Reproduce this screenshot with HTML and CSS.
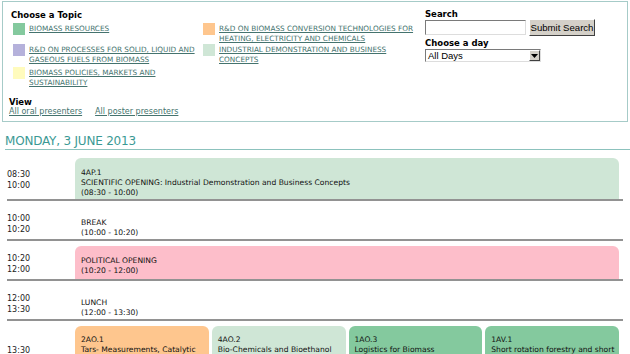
FILE: index.html
```html
<!DOCTYPE html>
<html>
<head>
<meta charset="utf-8">
<link rel="stylesheet" href="styles.css">
</head>
<body>
<div class="filters">
  <div class="topics">
    <div class="label">Choose a Topic</div>
    <div class="topic-grid">
      <div class="topic"><span class="sw c1"></span><a href="#">BIOMASS RESOURCES</a></div>
      <div class="topic"><span class="sw c4"></span><a href="#">R&amp;D ON BIOMASS CONVERSION TECHNOLOGIES FOR HEATING, ELECTRICITY AND CHEMICALS</a></div>
      <div class="topic"><span class="sw c2"></span><a href="#">R&amp;D ON PROCESSES FOR SOLID, LIQUID AND GASEOUS FUELS FROM BIOMASS</a></div>
      <div class="topic"><span class="sw c5"></span><a href="#">INDUSTRIAL DEMONSTRATION AND BUSINESS CONCEPTS</a></div>
      <div class="topic"><span class="sw c3"></span><a href="#">BIOMASS POLICIES, MARKETS AND SUSTAINABILITY</a></div>
    </div>
    <div class="view">
      <div class="label">View</div>
      <div class="view-links"><a href="#">All oral presenters</a><a href="#">All poster presenters</a></div>
    </div>
  </div>
  <div class="search">
    <div class="label">Search</div>
    <div class="search-row"><span class="input"></span><span class="button">Submit Search</span></div>
    <div class="label">Choose a day</div>
    <div class="select"><span class="select-text">All Days</span><span class="arrow"><svg width="7" height="4" viewBox="0 0 7 4"><path d="M0 0h7L3.5 4z" fill="#000"/></svg></span></div>
  </div>
</div>

<h2 class="day">MONDAY, 3 JUNE 2013</h2>

<div class="schedule">
  <div class="row">
    <div class="time">08:30<br>10:00</div>
    <div class="slots"><div class="block c5">4AP.1<br>SCIENTIFIC OPENING: Industrial Demonstration and Business Concepts<br>(08:30 - 10:00)</div></div>
  </div>
  <div class="row">
    <div class="time">10:00<br>10:20</div>
    <div class="slots"><div class="block plain">BREAK<br>(10:00 - 10:20)</div></div>
  </div>
  <div class="row">
    <div class="time">10:20<br>12:00</div>
    <div class="slots"><div class="block pink">POLITICAL OPENING<br>(10:20 - 12:00)</div></div>
  </div>
  <div class="row">
    <div class="time">12:00<br>13:30</div>
    <div class="slots"><div class="block plain">LUNCH<br>(12:00 - 13:30)</div></div>
  </div>
  <div class="row">
    <div class="time">13:30</div>
    <div class="slots multi">
      <div class="block c4">2AO.1<br>Tars- Measurements, Catalytic</div>
      <div class="block c5">4AO.2<br>Bio-Chemicals and Bioethanol</div>
      <div class="block c1">1AO.3<br>Logistics for Biomass</div>
      <div class="block c1">1AV.1<br>Short rotation forestry and short</div>
    </div>
  </div>
</div>
</body>
</html>
```
FILE: styles.css
```css
* { box-sizing: border-box; }
body {
  margin: 0;
  padding: 0 2px 0 2px;
  font-family: "DejaVu Sans", Verdana, sans-serif;
  font-size: 8px;
  color: #000;
  background: #fff;
  width: 630px;
  height: 354px;
  overflow: hidden;
}
a { color: #44736e; text-decoration: underline; }
.label { font-weight: bold; font-size: 8.5px; line-height: 10px; }

.filters {
  border: 1px solid #a6cbc8;
  margin-top: 1px;
  width: 626px;
  height: 121px;
  display: flex;
  padding: 8px 0 0 6px;
}
.topics { width: 417px; display: flex; flex-direction: column; }
.topics > .label { margin-left: 2px; }
.topic-grid {
  display: grid;
  grid-template-columns: 190px 225px;
  grid-template-rows: 21px 23px auto;
  margin-top: 3px;
  padding-left: 4px;
}
.topic { display: flex; align-items: flex-start; }
.topic a { line-height: 9.5px; font-size: 7.3px; margin-left: 4px; margin-top: 1px; }
.sw { width: 12px; height: 12px; flex: none; }
.c1 { background: #84c99e; }
.c2 { background: #b5b1db; }
.c3 { background: #fffbbd; }
.c4 { background: #fec68e; }
.c5 { background: #cfe6d6; }
.pink { background: #fdbeca; }

.view { margin-top: 10px; }
.view-links { display: flex; gap: 13px; line-height: 10px; }

.search { margin: -1px 0 0 -1px; }
.search-row { display: flex; align-items: center; gap: 3px; margin: 0 0 2px; }
.input {
  width: 101px; height: 15px;
  border: 1px solid #7a7a7a; border-right-color: #ddd; border-bottom-color: #ddd;
  background: #fff;
}
.button {
  width: 66px; height: 17px;
  background: #d4d0c8;
  border: 1px solid #fff; border-right-color: #404040; border-bottom-color: #404040;
  font-family: "Liberation Sans", Arial, sans-serif;
  font-size: 9.6px;
  white-space: nowrap;
  display: flex; align-items: center; justify-content: center;
  color: #000;
}
.select {
  width: 116px; height: 13px;
  margin-top: 1px;
  border: 1px solid #7a7a7a; border-right-color: #ddd; border-bottom-color: #ddd;
  display: flex; align-items: center; justify-content: space-between;
  font-family: "Liberation Sans", Arial, sans-serif;
  font-size: 9.5px;
  padding-left: 2px;
}
.arrow {
  width: 11px; height: 11px; background: #d4d0c8;
  border: 1px solid #fff; border-right-color: #404040; border-bottom-color: #404040;
  display: flex; align-items: center; justify-content: center;
}

.day {
  margin: 12px -2px 0 3px;
  font-weight: normal;
  font-size: 12px;
  letter-spacing: -0.2px;
  color: #3b9994;
  line-height: 14px;
  padding-bottom: 1px;
  border-bottom: 1px solid #8cc2bd;
}

.schedule { padding: 3px 0 0 5px; width: 621px; }
.row {
  display: grid;
  grid-template-columns: 68px 1fr;
  border-bottom: 2px solid #929292;
  padding-top: 5px;
}
.time { align-self: center; line-height: 10.5px; font-size: 8px; color: #222; padding-top: 4px; }
.slots { padding-right: 4px; }
.block {
  border-radius: 6px 6px 0 0;
  min-height: 33px;
  padding: 10px 6px 1px;
  line-height: 10px;
  font-size: 7.6px;
  color: #111;
}
.block.plain { background: transparent; padding: 12px 6px 0; }
.block.pink { padding-top: 10px; }
.multi { display: grid; grid-template-columns: repeat(4, 1fr); gap: 3px; }
.multi .block { white-space: nowrap; overflow: hidden; min-height: 46px; padding-top: 9px; }
```
